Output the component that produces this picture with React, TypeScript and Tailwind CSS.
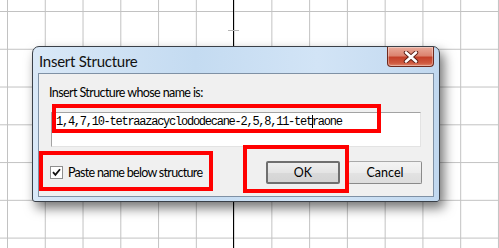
import React from 'react';

const ui = "font-['Lato','Noto_Sans',sans-serif]";

function CloseButton() {
  return (
    <div className="flex h-[20px] w-[47px] items-center justify-center rounded-b-[4px] border border-t-0 border-[#6e2a1e] bg-[linear-gradient(to_bottom,#e9aa9a_0%,#dc8470_45%,#c4412a_55%,#cf5a40_85%,#e08a70_100%)] shadow-[inset_0_0_0_1px_rgba(255,255,255,0.35)]">
      <svg width="16" height="12" viewBox="0 0 16 12">
        <path d="M3 1.5 L13 10.5 M13 1.5 L3 10.5" stroke="#5a1d14" strokeWidth="4.4" strokeLinecap="round" />
        <path d="M3 1.5 L13 10.5 M13 1.5 L3 10.5" stroke="#ffffff" strokeWidth="2.6" strokeLinecap="round" />
      </svg>
    </div>
  );
}

function Checkbox() {
  return (
    <div className="flex h-[13px] w-[13px] items-center justify-center border border-[#8e8f8f] bg-white">
      <svg width="9" height="9" viewBox="0 0 9 9">
        <path d="M1 4.2 L3.4 6.8 L8 1.2" fill="none" stroke="#111" strokeWidth="1.8" />
      </svg>
    </div>
  );
}

export default function App() {
  return (
    <div className="relative h-[248px] w-[499px] overflow-hidden bg-white bg-[linear-gradient(to_right,#c2c2c2_1px,transparent_1px),linear-gradient(to_bottom,#c2c2c2_1px,transparent_1px)] bg-size-[37.77px_37.77px] bg-position-[7px_11px]">
      {/* canvas axis */}
      <div className="absolute left-[233px] top-0 h-full w-px bg-black" />
      <div className="absolute left-[228px] top-[30px] h-px w-[11px] bg-[#b5b5b5]" />

      {/* dialog window */}
      <div className="absolute left-[32px] top-[46px] flex h-[156px] w-[408px] flex-col rounded-t-[7px] rounded-b-[3px] border border-[#3a4048] bg-[linear-gradient(to_right,#d9e8f7,#c4dbf1_40%,#d2e4f6_70%,#c1d8ef)] shadow-[4px_6px_12px_rgba(0,0,0,0.55)]">
        <div className="flex h-[26px] items-start justify-between">
          <span className={`${ui} pl-[6px] pt-[6px] text-[15px] leading-[17px] tracking-[-0.25px] text-[#111]`}>Insert Structure</span>
          <div className="mr-[5px]">
            <CloseButton />
          </div>
        </div>

        <div className="mx-[5px] flex h-[124px] flex-col border border-[#7f91a5] bg-[#f0f0f0]">
          <div className={`${ui} pl-[10px] pt-[11px] text-[12.5px] leading-[16px] tracking-[-0.6px] text-black`}>
            Insert Structure whose name is:
          </div>
          <div className="ml-[12px] mt-[11px] h-[35px] w-[370px] border border-[#a3a3a3] border-b-[#e3e3e3] border-r-[#e3e3e3] bg-white pl-[4px] pt-[2px]">
            <div className="font-['Liberation_Mono',monospace] text-[12px] leading-[14px] tracking-[-1.25px] text-black whitespace-nowrap">
              1,4,7,10-tetraazacyclododecane-2,5,8,11-tet
              <span className="-mr-px inline-block h-[13px] w-px bg-black align-middle" />
              raone
            </div>
          </div>
          <div className="mt-[14px] flex items-center justify-between pl-[11px] pr-[11px]">
            <div className="flex items-center gap-[5px]">
              <Checkbox />
              <span className={`${ui} text-[12.5px] leading-[16px] tracking-[-0.7px] text-black`}>Paste name below structure</span>
            </div>
            <div className="flex gap-[8px]">
              <button className={`${ui} h-[23px] w-[74px] rounded-[2px] border-2 border-[#6f6f6f] bg-[linear-gradient(to_bottom,#eeeeee,#e4e4e4_50%,#d9d9d9_51%,#d4d4d4)] text-[12.5px] leading-[16px] text-black`}>
                OK
              </button>
              <button className={`${ui} h-[23px] w-[74px] rounded-[2px] border border-[#a9a9a9] border-b-[#8a8a8a] border-r-[#8a8a8a] bg-[linear-gradient(to_bottom,#f3f3f3,#ececec_50%,#e3e3e3_51%,#dddddd)] text-[12.5px] leading-[16px] text-black`}>
                Cancel
              </button>
            </div>
          </div>
        </div>
      </div>

      {/* red annotation boxes */}
      <div className="absolute left-[52px] top-[104px] h-[29px] w-[329px] border-4 border-[#ff0000]" />
      <div className="absolute left-[39px] top-[151px] h-[40px] w-[174px] border-4 border-[#ff0000]" />
      <div className="absolute left-[243px] top-[145px] h-[48px] w-[106px] border-4 border-[#ff0000]" />
    </div>
  );
}
